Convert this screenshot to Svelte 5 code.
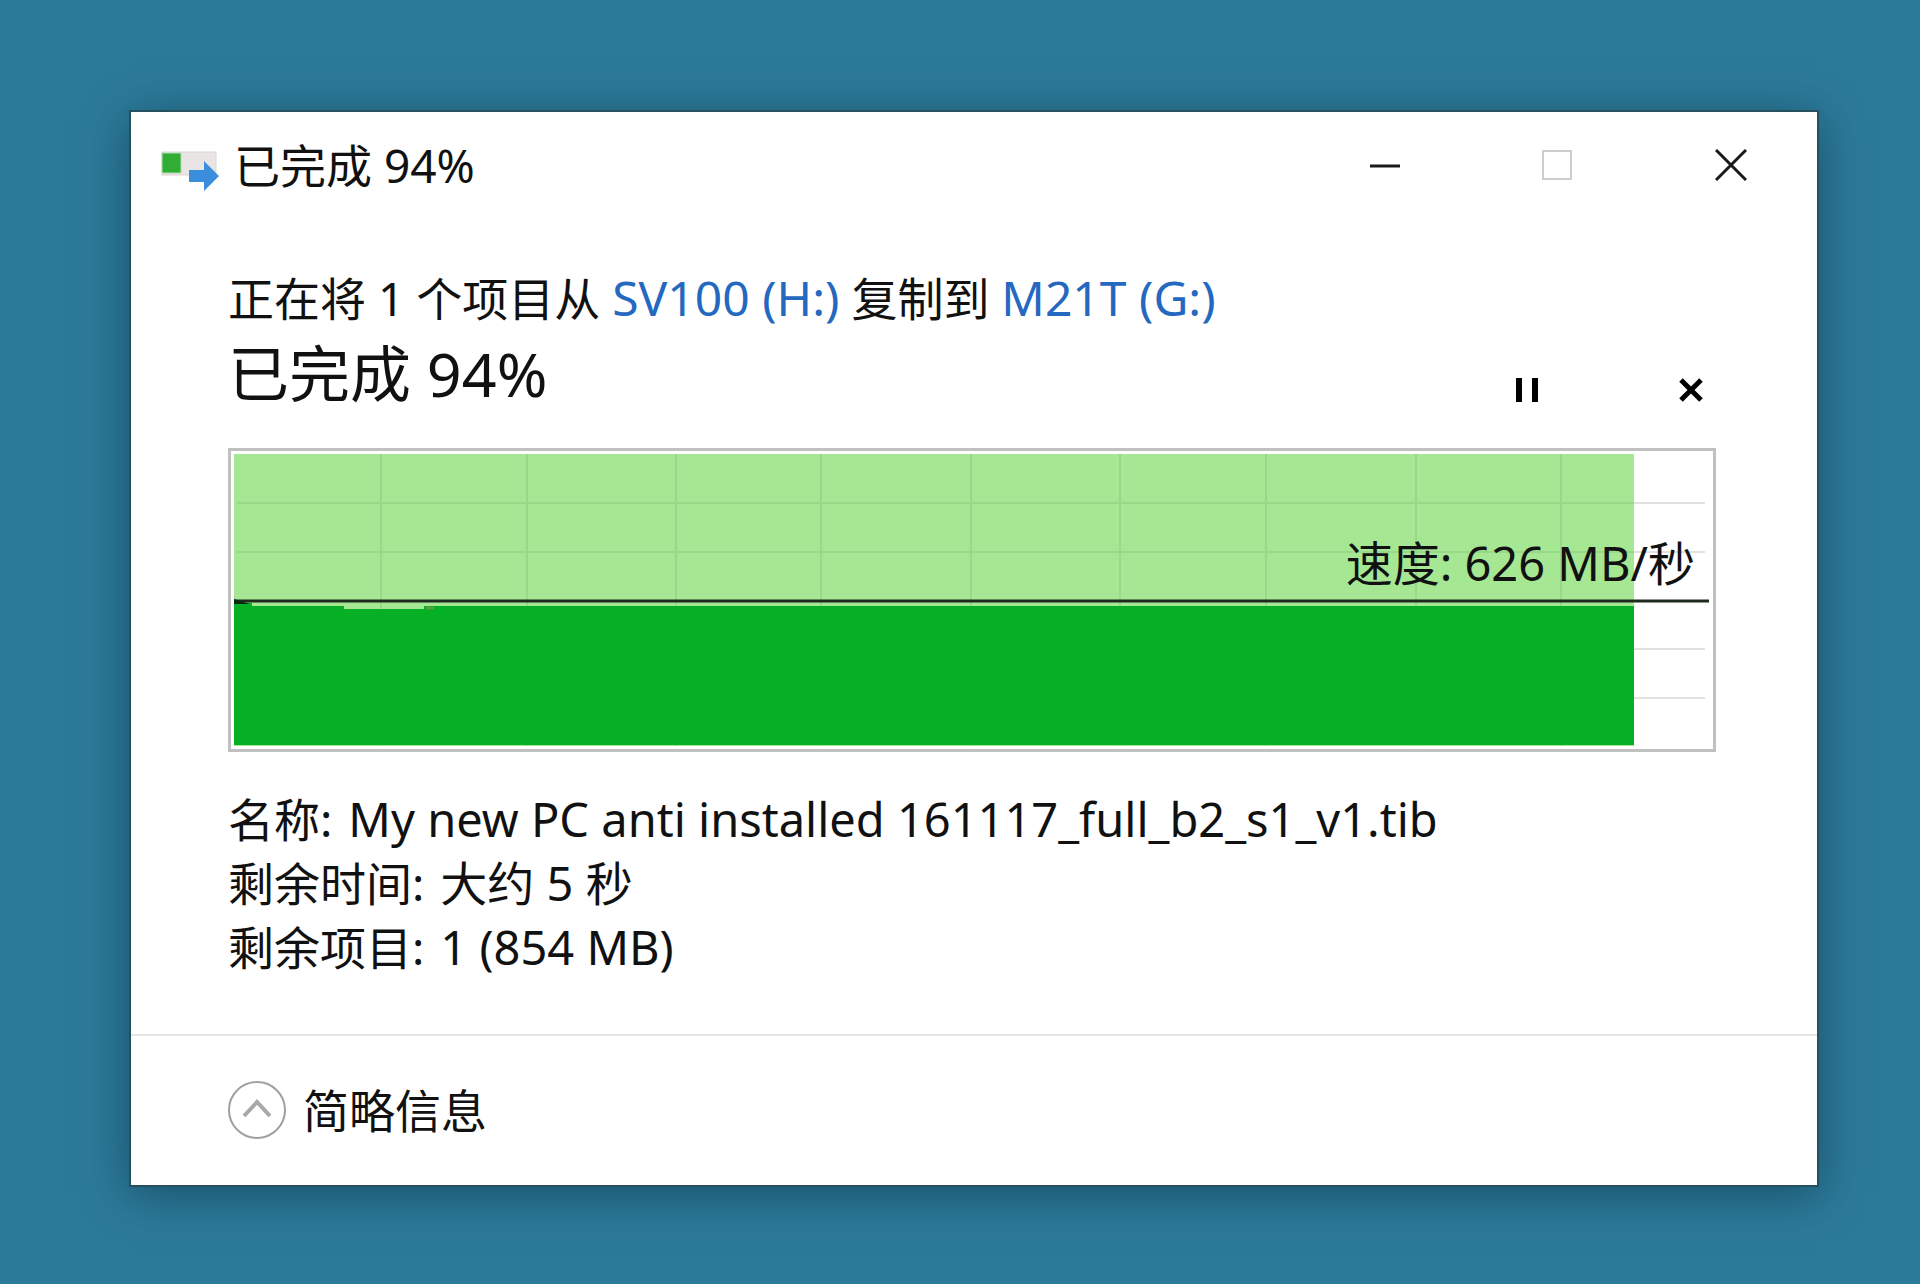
<script>
    let percent = 94;
    let source = 'SV100 (H:)';
    let target = 'M21T (G:)';
    let speed = '626 MB/秒';

    let details = [
        { label: '名称:', value: 'My new PC anti installed 161117_full_b2_s1_v1.tib' },
        { label: '剩余时间:', value: '大约 5 秒' },
        { label: '剩余项目:', value: '1 (854 MB)' }
    ];

    // chart grid, in viewBox units
    const columns = [147, 293, 442, 587, 737, 886, 1032, 1182, 1327];
    const rows = [49, 98, 195, 244];
</script>

<main class="desktop">
    <section class="window">
        <header class="titlebar">
            <svg class="app-icon" width="58" height="40" viewBox="0 0 58 40" aria-hidden="true">
                <rect x="1" y="1" width="54" height="23" fill="#e9e5e5" stroke="#ddd5d5" />
                <rect x="1" y="2" width="19" height="20" fill="#2fae33" stroke="#b5dcb4" />
                <path d="M28 19 H43 V10 L58 25 L43 40 V31 H28 Z" fill="#3b8edb" />
            </svg>
            <h1>已完成 {percent}%</h1>
            <div class="controls">
                <button aria-label="最小化">
                    <svg width="32" height="32" viewBox="0 0 32 32"><path d="M1 17 H31" stroke="#1a1a1a" stroke-width="3" /></svg>
                </button>
                <button aria-label="最大化" disabled>
                    <svg width="32" height="32" viewBox="0 0 32 32"><rect x="1" y="2" width="28" height="28" fill="none" stroke="#cccccc" stroke-width="2" /></svg>
                </button>
                <button aria-label="关闭">
                    <svg width="32" height="32" viewBox="0 0 32 32"><path d="M1 1 L31 31 M31 1 L1 31" stroke="#1a1a1a" stroke-width="3" /></svg>
                </button>
            </div>
        </header>

        <div class="content">
            <p class="summary">正在将 1 个项目从 <a href="#source">{source}</a> 复制到 <a href="#target">{target}</a></p>
            <div class="status">
                <h2>已完成 {percent}%</h2>
                <button aria-label="暂停">
                    <svg width="24" height="24" viewBox="0 0 24 24"><path d="M4 0 V24 M20 0 V24" stroke="#000" stroke-width="6" /></svg>
                </button>
                <button aria-label="取消">
                    <svg width="24" height="24" viewBox="0 0 24 24"><path d="M2 2 L22 22 M22 2 L2 22" stroke="#000" stroke-width="5" /></svg>
                </button>
            </div>

            <div class="chart">
                <svg viewBox="0 0 1476 292" preserveAspectRatio="none" aria-hidden="true">
                    {#each rows as y}
                        <path d="M3 {y} H1471" stroke="#dfe3e0" stroke-width="2" />
                    {/each}
                    <rect width="1400" height="292" fill="#a6e793" />
                    {#each rows as y}
                        <path d="M3 {y} H1400" stroke="#97d988" stroke-width="2" />
                    {/each}
                    {#each columns as x}
                        <path d="M{x} 0 V292" stroke="#97d988" stroke-width="2" />
                    {/each}
                    <path d="M0 148 L18 149 V152 H110 V155 H190 V152 H1400 V291 H0 Z" fill="#06b025" />
                    <path d="M192 154 H200" stroke="#58a040" stroke-width="3" />
                    <path d="M0 147 H1475" stroke="#1d2a1f" stroke-width="3" />
                    <path d="M0 145 L16 150 H0 Z" fill="#0a2a10" />
                </svg>
                <span class="speed">速度: {speed}</span>
            </div>

            <dl>
                {#each details as item}
                    <div class="row">
                        <dt>{item.label}</dt>
                        <dd>{item.value}</dd>
                    </div>
                {/each}
            </dl>
        </div>

        <footer>
            <button class="toggle">
                <svg width="58" height="58" viewBox="0 0 58 58" aria-hidden="true">
                    <circle cx="29" cy="29" r="28" fill="none" stroke="#a0a0a0" stroke-width="2" />
                    <path d="M16 35 L29 21 L42 35" fill="none" stroke="#a8a8a8" stroke-width="4" />
                </svg>
                简略信息
            </button>
        </footer>
    </section>
</main>

<style>
    :global(body) {
        margin: 0;
        background: #2c7a99;
    }
    .desktop {
        padding: 112px 103px 97px 131px;
        font-family: "Noto Sans", "Noto Sans CJK SC", sans-serif;
        font-size: 46px;
        line-height: 64px;
        color: #111;
    }
    .window {
        background: #fff;
        box-shadow: 0 0 0 2px #27505e, 0 8px 44px rgba(10, 40, 60, 0.55);
    }
    h1, h2, p, dl, dd {
        margin: 0;
        font-weight: 400;
    }
    h1 {
        flex: 1;
        font-size: 46px;
    }
    button {
        display: flex;
        align-items: center;
        justify-content: center;
        padding: 0;
        border: 0;
        background: none;
        font: inherit;
        color: inherit;
    }
    .titlebar {
        display: flex;
        align-items: center;
        gap: 15px;
        height: 106px;
        padding-left: 30px;
    }
    .app-icon {
        margin-top: 12px;
    }
    .controls {
        display: flex;
        align-self: stretch;
    }
    .controls button {
        width: 173px;
    }
    .content {
        padding: 48px 101px 55px 97px;
    }
    a {
        color: #2468c0;
        font-size: 48px;
        text-decoration: none;
    }
    .status {
        display: flex;
        align-items: center;
        height: 88px;
        margin-bottom: 30px;
    }
    h2 {
        flex: 1;
        font-size: 61px;
    }
    .status button {
        width: 60px;
        height: 60px;
        margin: 32px 0 0 104px;
    }
    .status button:last-child {
        margin-right: -5px;
    }
    .chart {
        position: relative;
        padding: 3px;
        border: 3px solid #c0c0c0;
    }
    .chart svg {
        display: block;
        width: 100%;
        height: 292px;
    }
    .speed {
        position: absolute;
        right: 18px;
        top: 80px;
        font-size: 47px;
    }
    dl {
        margin-top: 35px;
    }
    .row {
        display: flex;
        gap: 16px;
    }
    dd {
        font-size: 47px;
    }
    footer {
        padding: 42px 98px 43px 97px;
        border-top: 2px solid #e5e5e5;
    }
    .toggle {
        gap: 17px;
    }
</style>
